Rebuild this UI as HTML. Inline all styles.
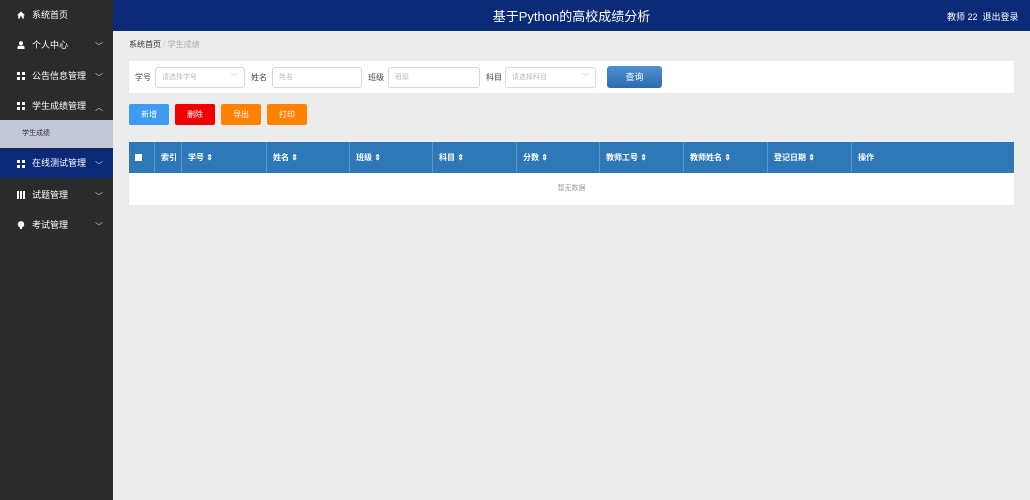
<!DOCTYPE html>
<html><head><meta charset="utf-8"><style>
*{margin:0;padding:0;box-sizing:border-box}
body{width:1030px;height:500px;overflow:hidden;background:#ececec;font-family:"Liberation Sans","Noto Sans CJK SC",sans-serif;position:relative}
.sb{position:absolute;left:0;top:0;width:113px;height:500px;background:#2b2b2b}
.it{position:absolute;left:0;width:113px;height:30px;color:#fff;font-size:9px;line-height:30px;padding-left:32px}
.it .ic{position:absolute;left:17px;top:11px;width:8px;height:8px}
.it .ar{position:absolute;left:95px;top:2px;font-size:8px;color:#ccc}
.g{background:linear-gradient(#fff,#fff) 0 0/3px 3px no-repeat,linear-gradient(#fff,#fff) 5px 0/3px 3px no-repeat,linear-gradient(#fff,#fff) 0 5px/3px 3px no-repeat,linear-gradient(#fff,#fff) 5px 5px/3px 3px no-repeat}
.hd{position:absolute;left:113px;top:0;width:917px;height:31px;background:#0a2a78;color:#fff}
.abs{position:absolute}
.lbl{position:absolute;font-size:8px;color:#444;top:72px}
.inp{position:absolute;top:67px;height:21px;border:1px solid #d8d8d8;border-radius:3px;background:#fff;font-size:7px;color:#bbb;line-height:19px;padding-left:6px}
.btn{position:absolute;top:104px;width:40px;height:21px;border-radius:2px;color:#fff;font-size:8px;text-align:center;line-height:21px}
.th{position:absolute;top:142px;height:31px;background:#2f78b7;border-right:1px solid #5b95c8;color:#fff;font-size:8px;font-weight:bold;line-height:31px;padding-left:6px}
</style></head><body>
<div class="sb">
 <div class="it" style="top:0"><svg class="ic" viewBox="0 0 8 8"><path d="M4 0.5L0 4.2H1.2V7.5H3V5.5H5V7.5H6.8V4.2H8Z" fill="#fff"/></svg>系统首页</div>
 <div class="it" style="top:30px"><svg class="ic" viewBox="0 0 8 8"><circle cx="4" cy="2.2" r="2" fill="#fff"/><path d="M0.5 8V6.5Q0.5 4.8 2.5 4.8H5.5Q7.5 4.8 7.5 6.5V8Z" fill="#fff"/></svg>个人中心<span class="ar">﹀</span></div>
 <div class="it" style="top:61px"><span class="ic g"></span>公告信息管理<span class="ar">﹀</span></div>
 <div class="it" style="top:91px"><span class="ic g"></span>学生成绩管理<span class="ar">︿</span></div>
 <div class="abs" style="left:0;top:120px;width:113px;height:28px;background:#c3c8db;color:#333;font-size:7px;line-height:28px;padding-left:22px">学生成绩</div>
 <div class="it" style="top:149px;height:29px;line-height:29px;background:#0a2a78"><span class="ic g"></span>在线测试管理<span class="ar">﹀</span></div>
 <div class="it" style="top:180px"><span class="ic g" style="background:repeating-linear-gradient(90deg,#fff 0 2px,transparent 2px 3px)"></span>试题管理<span class="ar">﹀</span></div>
 <div class="it" style="top:210px"><svg class="ic" viewBox="0 0 8 8"><circle cx="4" cy="3.3" r="3.2" fill="#fff"/><rect x="3" y="6" width="2" height="2" fill="#fff"/></svg>考试管理<span class="ar">﹀</span></div>
</div>
<div class="hd">
 <div class="abs" style="left:0;width:917px;top:6px;text-align:center;font-size:13px">基于Python的高校成绩分析</div>
 <div class="abs" style="left:834px;top:10px;font-size:9px">教师 22&nbsp; 退出登录</div>
</div>
<div class="abs" style="left:129px;top:39px;font-size:8px;color:#333">系统首页 <span style="color:#ccc">/</span> <span style="color:#aaa">学生成绩</span></div>
<div class="abs" style="left:129px;top:61px;width:885px;height:32px;background:#fff"></div>
<div class="lbl" style="left:135px">学号</div>
<div class="inp" style="left:155px;width:90px">请选择学号<span style="position:absolute;right:6px;color:#bbb">﹀</span></div>
<div class="lbl" style="left:251px">姓名</div>
<div class="inp" style="left:272px;width:90px">姓名</div>
<div class="lbl" style="left:368px">班级</div>
<div class="inp" style="left:388px;width:92px">班级</div>
<div class="lbl" style="left:486px">科目</div>
<div class="inp" style="left:505px;width:91px">请选择科目<span style="position:absolute;right:6px;color:#bbb">﹀</span></div>
<div class="abs" style="left:607px;top:66px;width:55px;height:22px;border-radius:3px;background:linear-gradient(#4f90d0,#2b6cb0);color:#fff;font-size:9px;text-align:center;line-height:22px">查询</div>
<div class="btn" style="left:129px;background:#3d9cf1">新增</div>
<div class="btn" style="left:175px;background:#ee0000">删除</div>
<div class="btn" style="left:221px;background:#ff8200">导出</div>
<div class="btn" style="left:267px;background:#ff8200">打印</div>
<div class="th" style="left:129px;width:26px"><span style="display:inline-block;width:7px;height:7px;background:#fff;margin-top:12px;vertical-align:top"></span></div>
<div class="th" style="left:155px;width:27px">索引</div>
<div class="th" style="left:182px;width:85px">学号 ⇕</div>
<div class="th" style="left:267px;width:83px">姓名 ⇕</div>
<div class="th" style="left:350px;width:83px">班级 ⇕</div>
<div class="th" style="left:433px;width:84px">科目 ⇕</div>
<div class="th" style="left:517px;width:83px">分数 ⇕</div>
<div class="th" style="left:600px;width:84px">教师工号 ⇕</div>
<div class="th" style="left:684px;width:84px">教师姓名 ⇕</div>
<div class="th" style="left:768px;width:84px">登记日期 ⇕</div>
<div class="th" style="left:852px;width:162px;border-right:0">操作</div>
<div class="abs" style="left:129px;top:173px;width:885px;height:32px;background:#fff;text-align:center;font-size:7px;color:#999;line-height:32px">暂无数据</div>
</body></html>
